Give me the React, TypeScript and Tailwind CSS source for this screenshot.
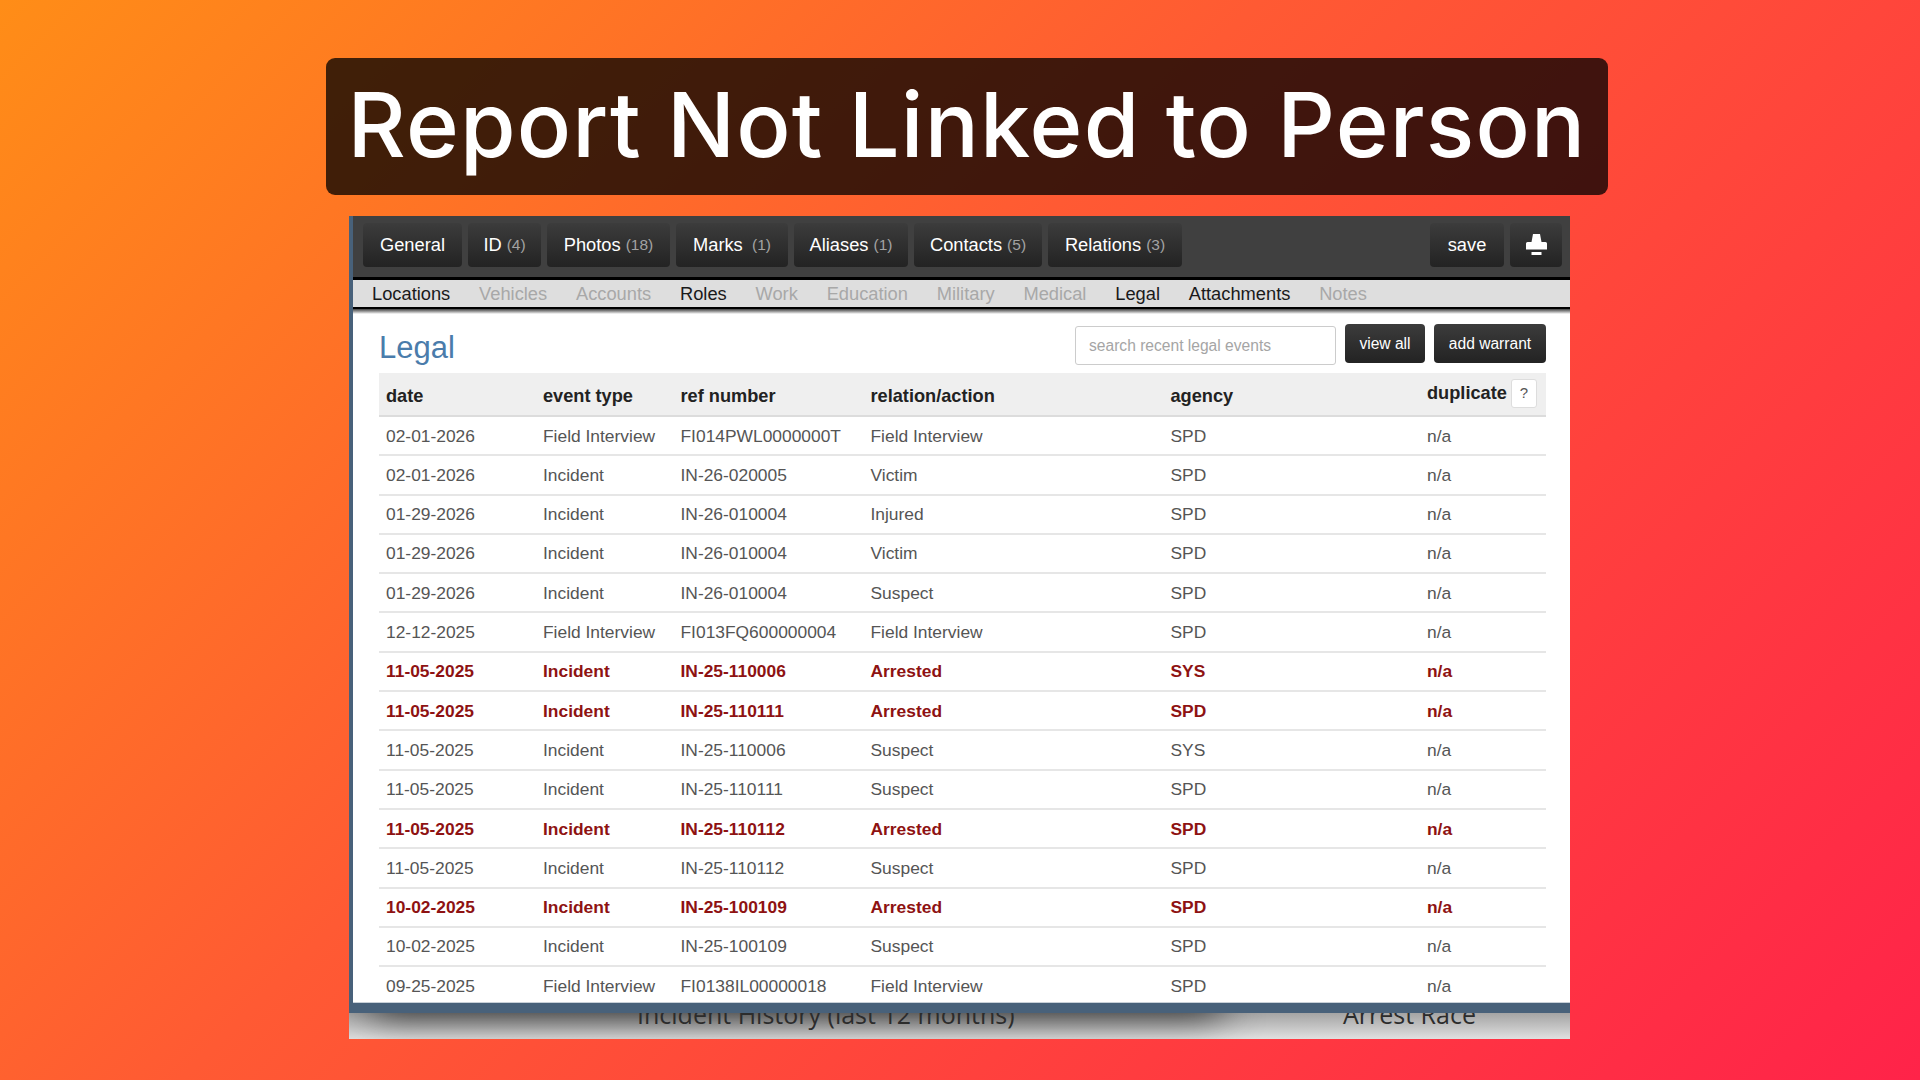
import { type FC } from "react";

const tabs = [
  { label: "General", extra: "", w: "w-[99px]" },
  { label: "ID", extra: "(4)", w: "w-[73px]" },
  { label: "Photos", extra: "(18)", w: "w-[123px]" },
  { label: "Marks", extra: "\u00a0(1)", w: "w-[112px]" },
  { label: "Aliases", extra: "(1)", w: "w-[114px]" },
  { label: "Contacts", extra: "(5)", w: "w-[128px]" },
  { label: "Relations", extra: "(3)", w: "w-[134px]" },
];

const subTabs = [
  { label: "Locations", on: true },
  { label: "Vehicles", on: false },
  { label: "Accounts", on: false },
  { label: "Roles", on: true },
  { label: "Work", on: false },
  { label: "Education", on: false },
  { label: "Military", on: false },
  { label: "Medical", on: false },
  { label: "Legal", on: true },
  { label: "Attachments", on: true },
  { label: "Notes", on: false },
];

type Row = [string, string, string, string, string, boolean];

const rows: Row[] = [
  ["02-01-2026", "Field Interview", "FI014PWL0000000T", "Field Interview", "SPD", false],
  ["02-01-2026", "Incident", "IN-26-020005", "Victim", "SPD", false],
  ["01-29-2026", "Incident", "IN-26-010004", "Injured", "SPD", false],
  ["01-29-2026", "Incident", "IN-26-010004", "Victim", "SPD", false],
  ["01-29-2026", "Incident", "IN-26-010004", "Suspect", "SPD", false],
  ["12-12-2025", "Field Interview", "FI013FQ600000004", "Field Interview", "SPD", false],
  ["11-05-2025", "Incident", "IN-25-110006", "Arrested", "SYS", true],
  ["11-05-2025", "Incident", "IN-25-110111", "Arrested", "SPD", true],
  ["11-05-2025", "Incident", "IN-25-110006", "Suspect", "SYS", false],
  ["11-05-2025", "Incident", "IN-25-110111", "Suspect", "SPD", false],
  ["11-05-2025", "Incident", "IN-25-110112", "Arrested", "SPD", true],
  ["11-05-2025", "Incident", "IN-25-110112", "Suspect", "SPD", false],
  ["10-02-2025", "Incident", "IN-25-100109", "Arrested", "SPD", true],
  ["10-02-2025", "Incident", "IN-25-100109", "Suspect", "SPD", false],
  ["09-25-2025", "Field Interview", "FI0138IL00000018", "Field Interview", "SPD", false],
];

const darkBtn =
  "flex items-center justify-center rounded-[4px] bg-gradient-to-b from-[#3c3c3c] to-[#232323] text-white";

const PrintIcon: FC = () => (
  <svg width="21" height="21" viewBox="0 0 21 21" fill="#fff">
    <path d="M7 0h7l1.500 8h-10z" />
    <path d="M1.500 8h18a1.500 1.500 0 0 1 1.500 1.500v6h-21v-6a1.500 1.500 0 0 1 1.500-1.500z" />
    <path d="M5.500 18h10v3h-10z" />
  </svg>
);

const App: FC = () => {
  return (
    <div className="w-[1920px] h-[1080px] overflow-hidden bg-[linear-gradient(135deg,#ff8d17_0%,#ff5a33_42%,#ff2349_100%)] font-['Liberation_Sans',Arial,sans-serif]">
      <div className="ml-[326px] mt-[58px] w-[1282px] h-[137px] rounded-[9px] bg-black/75 flex items-center justify-center">
        <h1 className="text-white font-['Inter',sans-serif] font-medium text-[90px] leading-none tracking-[1.2px] whitespace-nowrap -mt-[3px]">
          Report Not Linked to Person
        </h1>
      </div>

      <div className="ml-[349px] mt-[21px] w-[1221px]">
        <div className="border-l-4 border-b-[10px] border-[#48617a] bg-white h-[797px] overflow-hidden shadow-[inset_0_-1px_0_#c8d0d8]">
          <div className="h-[61px] bg-[#404040] pl-[10px] pr-[8px] pt-[7px] flex justify-between items-start">
            <div className="flex gap-[6px]">
              {tabs.map((t) => (
                <div key={t.label} className={`${darkBtn} ${t.w} h-[44px] text-[18.3px] whitespace-nowrap`}>
                  {t.label}
                  {t.extra && <span className="text-[15.5px] text-[#a3a3a3] ml-[5px]">{t.extra}</span>}
                </div>
              ))}
            </div>
            <div className="flex gap-[6px]">
              <div className={`${darkBtn} w-[74px] h-[44px] text-[18.3px]`}>save</div>
              <div className={`${darkBtn} w-[52px] h-[44px] pb-[2px]`}>
                <PrintIcon />
              </div>
            </div>
          </div>

          <div className="h-[3px] bg-black" />
          <div className="h-[27px] bg-[#dedede] flex items-center pl-[19px] gap-[28.8px] text-[18.3px]">
            {subTabs.map((s) => (
              <span key={s.label} className={s.on ? "text-[#1a1a1a]" : "text-[#a8a8a8]"}>
                {s.label}
              </span>
            ))}
          </div>
          <div className="h-[2px] bg-black" />
          <div className="h-[5px] bg-gradient-to-b from-[#444] to-white" />

          <div className="pl-[26px] pr-[24px]">
            <div className="flex items-center justify-between h-[59px]">
              <h2 className="text-[31px] font-normal text-[#4a7cab] leading-none pt-[7px]">Legal</h2>
              <div className="flex items-start gap-[9px] pt-[2px]">
                <div className="w-[261px] h-[39px] mt-[2px] border border-[#ccc] rounded-[3px] flex items-center pl-[13px] text-[15.6px] text-[#a5a5a5]">
                  search recent legal events
                </div>
                <div className={`${darkBtn} w-[80px] h-[39px] text-[15.6px]`}>view all</div>
                <div className={`${darkBtn} w-[112px] h-[39px] text-[15.6px]`}>add warrant</div>
              </div>
            </div>

            <div className="flex items-center h-[44px] pt-[5px] bg-[#efefef] border-b-2 border-[#dcdcdc] text-[18.2px] font-bold text-[#222]">
              <div className="w-[164px] pl-[7px]">date</div>
              <div className="w-[137.5px]">event type</div>
              <div className="w-[190px]">ref number</div>
              <div className="w-[300px]">relation/action</div>
              <div className="w-[256.5px]">agency</div>
              <div className="flex items-center gap-[4px] -mt-[6px] whitespace-nowrap">
                duplicate
                <span className="w-[26px] h-[29px] bg-white border border-[#ddd] rounded-[3px] flex items-center justify-center font-normal text-[15px] text-[#555]">
                  ?
                </span>
              </div>
            </div>

            {rows.map((r, i) => (
              <div
                key={i}
                className={`flex items-center h-[39.3px] border-b-2 border-[#e6e6e6] text-[17.4px] ${
                  r[5] ? "font-bold text-[#8e1212]" : "text-[#555]"
                }`}
              >
                <div className="w-[164px] pl-[7px]">{r[0]}</div>
                <div className="w-[137.5px]">{r[1]}</div>
                <div className="w-[190px]">{r[2]}</div>
                <div className="w-[300px]">{r[3]}</div>
                <div className="w-[256.5px]">{r[4]}</div>
                <div>n/a</div>
              </div>
            ))}
          </div>
        </div>

        <div className="relative h-[26px] overflow-hidden bg-gradient-to-b from-[#a4a4a4] to-[#e0e0e0] font-['Open_Sans',sans-serif] text-[25px] text-[#2c2c2c] leading-none">
          <div className="absolute left-[22px] -top-[40px] w-[850px] h-[40px] shadow-[0_0_40px_0_rgba(0,0,0,0.85)]" />
          <div className="relative flex -mt-[11px]">
            <span className="ml-[288px] w-[706px] whitespace-nowrap">Incident History (last 12 months)</span>
            <span className="whitespace-nowrap">Arrest Race</span>
          </div>
        </div>
      </div>
    </div>
  );
};

export default App;
